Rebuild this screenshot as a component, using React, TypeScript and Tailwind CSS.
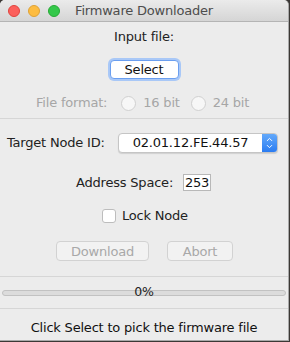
import { ChevronDown, ChevronUp } from 'lucide-react';

const font = { fontFamily: '"Lucida Grande", "DejaVu Sans", "Liberation Sans", sans-serif' };

function Radio({ label }: { label: string }) {
  return (
    <div className="flex items-center gap-[7px]">
      <span className="w-[15px] h-[15px] rounded-full border border-[#d0d0d0] bg-[#f7f7f7]" />
      <span className="text-[#a6a6a6]">{label}</span>
    </div>
  );
}

export default function App() {
  return (
    <div className="w-[290px] h-[342px] bg-[#3b3835] overflow-hidden" style={font}>
      <div className="w-[289px] h-[341px] bg-[#ececec] rounded-t-[5px] border-r border-b border-[#a9a9a9] flex flex-col text-[13px] tracking-[-0.2px] text-[#222]">
        {/* Title bar */}
        <div className="h-[22px] shrink-0 flex items-center rounded-t-[5px] border-b border-[#b4b4b4] bg-gradient-to-b from-[#ebebeb] to-[#d5d5d5] relative">
          <div className="flex items-center gap-[8px] pl-[8px]">
            <span className="w-[12px] h-[12px] rounded-full bg-[#fc605c] border border-[#e0443e]" />
            <span className="w-[12px] h-[12px] rounded-full bg-[#fdbc40] border border-[#dea236]" />
            <span className="w-[12px] h-[12px] rounded-full bg-[#34c84a] border border-[#27aa35]" />
          </div>
          <div className="absolute inset-0 flex items-center justify-center text-[#4d4d4d]">Firmware Downloader</div>
        </div>

        {/* Input file */}
        <div className="h-[30px] shrink-0 flex items-center justify-center">Input file:</div>
        <div className="mt-[8px] flex justify-center">
          <button className="w-[69px] h-[19px] rounded-[4px] bg-white border border-[#6b9ff0] ring-[2px] ring-[#a9c8f7] text-[#111] leading-none">
            Select
          </button>
        </div>
        <div className="mt-[14px] h-[20px] flex items-center gap-[11px] pl-[36px]">
          <span className="text-[#a6a6a6] mr-[3px]">File format:</span>
          <Radio label="16 bit" />
          <Radio label="24 bit" />
        </div>
        <div className="mt-[5px] h-px bg-[#d6d6d6]" />

        {/* Target node */}
        <div className="mt-[14px] h-[20px] flex items-center pl-[7px]">
          <span className="w-[111px]">Target Node ID:</span>
          <div className="w-[160px] h-[20px] flex rounded-[4px] bg-white border border-[#c5c5c5] shadow-[0_1px_1px_rgba(0,0,0,0.12)] overflow-hidden">
            <span className="flex-1 flex items-center justify-center text-[13px] text-[#111]">02.01.12.FE.44.57</span>
            <span className="w-[15px] flex flex-col items-center justify-center bg-gradient-to-b from-[#63a9fa] to-[#2a7cf2] text-white">
              <ChevronUp size={9} strokeWidth={2.5} className="-mb-[2px]" />
              <ChevronDown size={9} strokeWidth={2.5} />
            </span>
          </div>
        </div>

        {/* Address space */}
        <div className="mt-[21px] h-[17px] flex items-center pl-[76px]">
          <span className="w-[107px]">Address Space:</span>
          <span className="w-[28px] h-[17px] bg-white border border-[#b8b8b8] flex items-center justify-center text-[#111]">253</span>
        </div>

        {/* Lock node */}
        <div className="mt-[18px] h-[14px] flex items-center pl-[102px] gap-[6px]">
          <span className="w-[14px] h-[14px] rounded-[3px] bg-white border border-[#bdbdbd]" />
          <span>Lock Node</span>
        </div>

        {/* Buttons */}
        <div className="mt-[18px] flex pl-[56px] gap-[18px]">
          <button className="w-[93px] h-[20px] rounded-[4px] bg-[#f2f2f2] border border-[#d2d2d2] text-[#a8a8a8] leading-none">Download</button>
          <button className="w-[66px] h-[20px] rounded-[4px] bg-[#f2f2f2] border border-[#d2d2d2] text-[#a8a8a8] leading-none">Abort</button>
        </div>
        <div className="mt-[15px] h-px bg-[#d6d6d6]" />

        {/* Progress */}
        <div className="mt-[13px] mx-[2px] h-[6px] rounded-full bg-[#dcdcdc] border border-[#c2c2c2] relative">
          <span className="absolute left-0 right-0 -top-[6px] text-center text-[12.5px] leading-[14px] text-[#222]">0%</span>
        </div>
        <div className="mt-[12px] h-px bg-[#d6d6d6]" />

        {/* Status */}
        <div className="flex-1 flex items-center justify-center pt-[7px] text-[#111]">Click Select to pick the firmware file</div>
      </div>
    </div>
  );
}
